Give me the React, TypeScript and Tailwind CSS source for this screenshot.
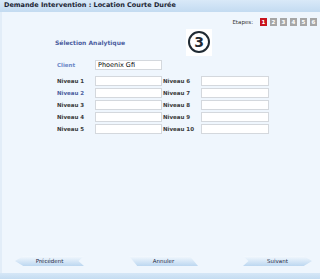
const steps = [1, 2, 3, 4, 5, 6];

const rows = [
  { left: "Niveau 1", right: "Niveau 6" },
  { left: "Niveau 2", right: "Niveau 7", blue: true },
  { left: "Niveau 3", right: "Niveau 8" },
  { left: "Niveau 4", right: "Niveau 9" },
  { left: "Niveau 5", right: "Niveau 10" },
];

const Field = ({ value = "" }: { value?: string }) => (
  <div className="h-[10px] bg-white border border-[#d4d8dd] text-[6.5px] font-normal leading-[8px] pl-[2px] text-black">
    {value}
  </div>
);

const NavButton = ({ label, shape }: { label: string; shape: string }) => (
  <div
    className="w-[69px] h-[10px] flex items-center justify-center text-[5.5px] text-[#1e2a44] bg-gradient-to-b from-[#f4f9fe] to-[#bcd7f0]"
    style={{ clipPath: shape }}
  >
    {label}
  </div>
);

export default function App() {
  return (
    <div
      className="w-[320px] h-[279px] flex flex-col bg-[#eff6fd] overflow-hidden"
      style={{ fontFamily: "Verdana, 'DejaVu Sans', sans-serif" }}
    >
      <div className="h-[12px] bg-gradient-to-b from-[#d9e9f8] to-[#c3dbf1] flex items-center pl-[4px] text-[6.5px] font-bold text-[#1b2433]">
        Demande Intervention : Location Courte Durée
      </div>

      <div className="flex-1 flex flex-col border-l-2 border-[#e2edf8]">
        <div className="flex justify-end items-center gap-[3px] pr-[3px] mt-[6px]">
          <span className="text-[5.5px] text-[#333] mr-[4px]">Etapes:</span>
          {steps.map((n) => (
            <span
              key={n}
              className={`w-[7px] h-[8px] flex items-center justify-center text-[5.5px] font-bold text-white ${
                n === 1 ? "bg-[#c8141e]" : "bg-[#a6a6a6]"
              }`}
            >
              {n}
            </span>
          ))}
        </div>

        <div className="flex items-center h-[28px] mt-[2px] pl-[53px]">
          <span className="w-[131px] text-[6px] font-bold text-[#4c5ea0]">Sélection Analytique</span>
          <div className="w-[26px] h-[27px] bg-white flex items-center justify-center">
            <div className="w-[22px] h-[22px] rounded-full border-2 border-[#1f2a33] flex items-center justify-center text-[14px] font-bold leading-none text-[#1f2a33]">
              3
            </div>
          </div>
        </div>

        <div className="grid grid-cols-[38px_67px_39px_68px] gap-y-[2px] items-center pl-[55px] mt-[4px] text-[5.5px] font-bold text-[#3a3a3a]">
          <span className="text-[#6a86c6]">Client</span>
          <Field value="Phoenix Gfi" />
          <span />
          <span />
          <span className="col-span-4 h-[2px]" />
          {rows.map((r) => (
            <div key={r.left} className="contents">
              <span className={r.blue ? "text-[#4c5ea0]" : ""}>{r.left}</span>
              <Field />
              <span className="pl-[1px]">{r.right}</span>
              <Field />
            </div>
          ))}
        </div>

        <div className="flex-1" />

        <div className="flex justify-between items-center px-[13px] mb-[7px] pr-[8px]">
          <NavButton label="Précédent" shape="polygon(0 50%, 12% 0, 100% 0, 92% 50%, 100% 100%, 12% 100%)" />
          <NavButton label="Annuler" shape="polygon(0 0, 88% 0, 100% 100%, 12% 100%)" />
          <NavButton label="Suivant" shape="polygon(0 0, 88% 0, 100% 50%, 88% 100%, 0 100%, 8% 50%)" />
        </div>
      </div>

      <div className="h-[6px] bg-gradient-to-b from-[#d6e7f7] to-[#c4dcf1]" />
    </div>
  );
}
